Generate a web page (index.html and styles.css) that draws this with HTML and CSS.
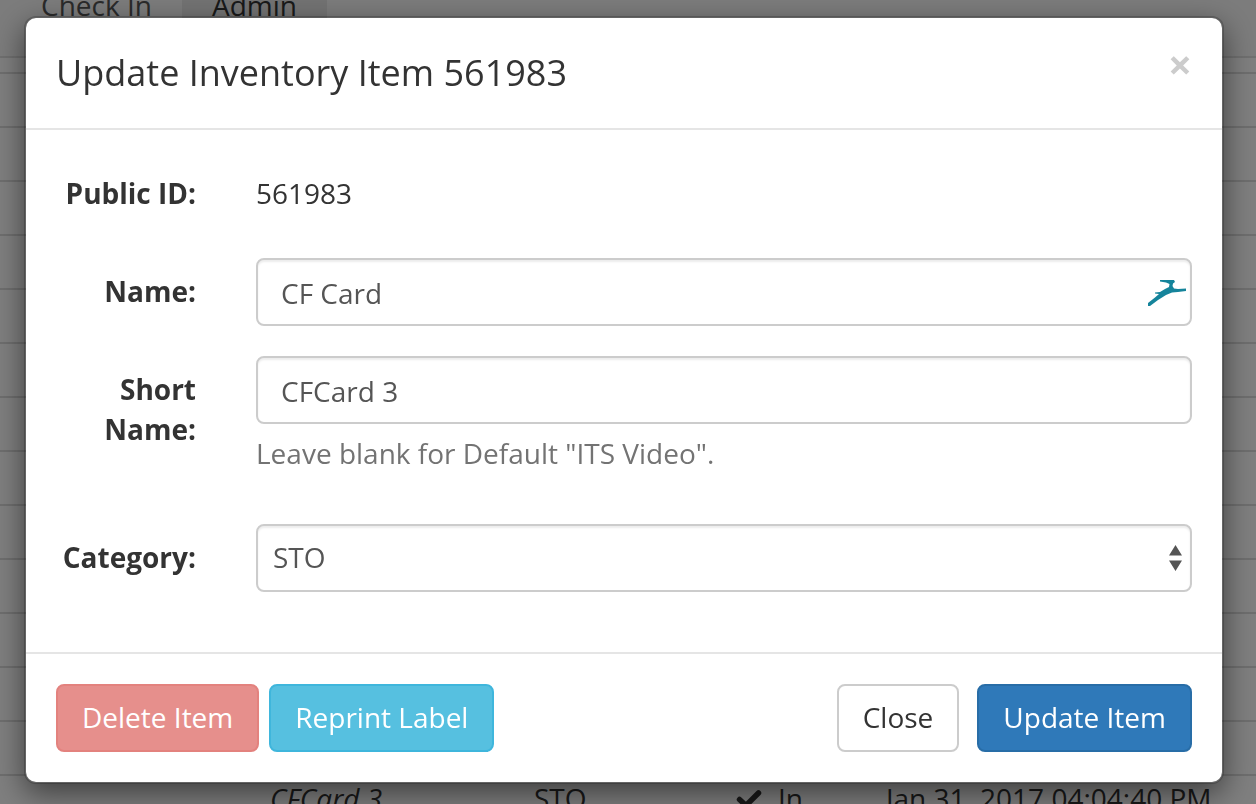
FILE: index.html
```html
<!DOCTYPE html>
<html lang="en">
<head>
<meta charset="utf-8">
<title>Update Inventory Item</title>
<link rel="stylesheet" href="styles.css">
</head>
<body>
<nav class="tabs">
  <a class="tab" href="#checkin">Check In</a>
  <a class="tab tab-active" href="#admin">Admin</a>
</nav>
<table class="inventory">
  <colgroup><col class="col-id"><col class="col-name"><col class="col-cat"><col class="col-status"><col></colgroup>
  <tbody>
    <tr><td></td><td></td><td></td><td></td><td></td></tr>
    <tr><td></td><td></td><td></td><td></td><td></td></tr>
    <tr><td></td><td></td><td></td><td></td><td></td></tr>
    <tr><td></td><td></td><td></td><td></td><td></td></tr>
    <tr><td></td><td></td><td></td><td></td><td></td></tr>
    <tr><td></td><td></td><td></td><td></td><td></td></tr>
    <tr><td></td><td></td><td></td><td></td><td></td></tr>
    <tr><td></td><td></td><td></td><td></td><td></td></tr>
    <tr><td></td><td></td><td></td><td></td><td></td></tr>
    <tr><td></td><td></td><td></td><td></td><td></td></tr>
    <tr><td></td><td></td><td></td><td></td><td></td></tr>
    <tr><td></td><td></td><td></td><td></td><td></td></tr>
    <tr><td></td><td></td><td></td><td></td><td></td></tr>
    <tr>
      <td></td>
      <td><em>CFCard 3</em></td>
      <td>STO</td>
      <td><span class="status"><svg class="check" viewBox="0 0 26 20" aria-hidden="true"><path d="M3.500 11.500L10 17.500 22.500 5" fill="none" stroke="#333" stroke-width="5.500" stroke-linecap="round"/></svg>In</span></td>
      <td>Jan 31, 2017 04:04:40 PM</td>
    </tr>
  </tbody>
</table>

<div class="backdrop">
  <form class="modal" role="dialog" aria-labelledby="modal-title">
    <header class="modal-header">
      <h1 class="modal-title" id="modal-title">Update Inventory Item 561983</h1>
      <button class="dismiss" type="button" aria-label="Dismiss">×</button>
    </header>
    <div class="modal-body">
      <div class="row">
        <span class="label">Public ID:</span>
        <span class="static">561983</span>
      </div>
      <div class="row">
        <label class="label" for="name">Name:</label>
        <div class="field">
          <input class="control" id="name" type="text" value="CF Card">
          <svg class="autofill" viewBox="0 0 38 26" aria-hidden="true">
            <path d="M12 0H26L27 2 25 3.500 24.500 6 26 8.500 30 9 38 8.500V11L30 12 24 12.500 18 15 10 20 2 26H0V23L7 17.500 11 14 7 13.500V12.500L12 12 17 9 21 7 21.500 4 18 2.500 12 1.500Z" fill="#15849b"/>
          </svg>
        </div>
      </div>
      <div class="row">
        <label class="label" for="short-name">Short Name:</label>
        <div class="field">
          <input class="control" id="short-name" type="text" value="CFCard 3" aria-describedby="short-help">
          <p class="help" id="short-help">Leave blank for Default "ITS Video".</p>
        </div>
      </div>
      <div class="row">
        <label class="label" for="category">Category:</label>
        <div class="field">
          <select class="control select" id="category"><option>STO</option></select>
          <svg class="arrows" viewBox="0 0 13 26" aria-hidden="true"><path d="M6.500 0L13 10.500H0ZM0 15.500H13L6.500 26Z" fill="#555"/></svg>
        </div>
      </div>
    </div>
    <footer class="modal-footer">
      <div class="group group-start">
        <button class="btn btn-danger" type="button" disabled>Delete Item</button>
        <button class="btn btn-info" type="button">Reprint Label</button>
      </div>
      <div class="group group-end">
        <button class="btn" type="button">Close</button>
        <button class="btn btn-primary" type="submit">Update Item</button>
      </div>
    </footer>
  </form>
</div>
</body>
</html>
```
FILE: styles.css
```css
* { box-sizing: border-box; }

body {
  margin: 0;
  height: 100vh;
  overflow: hidden;
  background: #fff;
  color: #333;
  font: 28px/40px "Open Sans", "Noto Sans", sans-serif;
}

.tabs {
  display: flex;
  height: 58px;
  margin-bottom: 14px;
  padding-left: 11px;
  background: #f8f8f8;
  border-bottom: 2px solid #e0e0e0;
}
.tab {
  height: 56px;
  padding: 0 30px;
  line-height: 10px;
  color: #555;
  text-decoration: none;
}
.tab-active { background: #e7e7e7; color: #333; }

.inventory { width: 100%; border-collapse: collapse; table-layout: fixed; }
.inventory td {
  height: 54px;
  padding: 2px 10px;
  border-top: 2px solid #ddd;
  vertical-align: top;
  white-space: nowrap;
}
.col-id { width: 260px; }
.col-name { width: 264px; }
.col-cat { width: 202px; }
.col-status { width: 150px; }
.status { display: flex; align-items: center; gap: 16px; }
.check { width: 26px; height: 20px; }

.backdrop {
  position: fixed;
  inset: 0;
  padding: 16px 32px 16px 24px;
  background: rgba(0, 0, 0, .5);
}
.modal {
  background: #fff;
  background-clip: padding-box;
  border: 2px solid rgba(0, 0, 0, .2);
  border-radius: 12px;
  box-shadow: 0 10px 30px rgba(0, 0, 0, .5);
}
.modal-header {
  display: flex;
  justify-content: space-between;
  align-items: flex-start;
  padding: 30px;
  border-bottom: 2px solid #e5e5e5;
}
.modal-title { margin: 0; font-size: 36px; line-height: 50px; font-weight: 400; }
.dismiss {
  padding: 0;
  border: 0;
  background: none;
  color: #ccc;
  font: 700 42px/32px "Open Sans", sans-serif;
}

.modal-body { display: grid; gap: 30px; padding: 30px 30px 60px; }
.row { display: grid; grid-template-columns: 140px 1fr; column-gap: 60px; }
.label { padding-top: 13px; text-align: right; font-weight: 700; }
.static { padding: 13px 0 15px; }
.field { position: relative; }
.control {
  display: block;
  width: 100%;
  height: 68px;
  padding: 12px 23px 10px;
  border: 2px solid #ccc;
  border-radius: 8px;
  background: #fff;
  box-shadow: inset 0 2px 2px rgba(0, 0, 0, .075);
  color: #555;
  font: inherit;
}
.select { appearance: none; padding: 11px 15px 13px; }
.autofill { position: absolute; top: 22px; right: 6px; width: 38px; height: 26px; }
.arrows { position: absolute; top: 21px; right: 10px; width: 13px; height: 26px; pointer-events: none; }
.help { margin: 9px 0 21px; color: #737373; }

.modal-footer {
  display: flex;
  justify-content: space-between;
  padding: 30px;
  border-top: 2px solid #e5e5e5;
}
.group { display: flex; }
.group-start { gap: 10px; }
.group-end { gap: 18px; }
.btn {
  padding: 11px 24px 13px;
  border: 2px solid #ccc;
  border-radius: 8px;
  background: #fff;
  color: #333;
  font: inherit;
}
.btn-danger { background: #d9534f; border-color: #d43f3a; color: #fff; opacity: .65; }
.btn-info { background: #56c0e0; border-color: #3fb6dc; color: #fff; }
.btn-primary { background: #2f79b9; border-color: #286da7; color: #fff; }
```
